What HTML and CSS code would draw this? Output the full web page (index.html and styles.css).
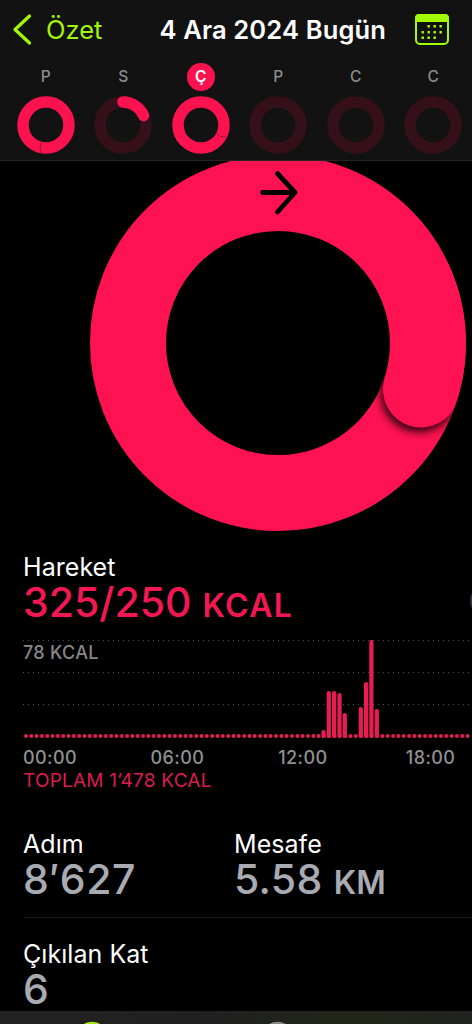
FILE: index.html
```html
<!DOCTYPE html>
<html lang="tr">
<head>
<meta charset="utf-8">
<title>4 Ara 2024</title>
<link rel="stylesheet" href="styles.css">
</head>
<body>
<div class="screen">
  <header class="header">
    <nav class="nav">
      <svg class="back" width="22" height="34" viewBox="0 0 22 34"><path d="M18.500 4 4 17.500 18.500 31"/></svg>
      <span class="back-label">Özet</span>
      <h1 class="title">4 Ara 2024 Bugün</h1>
      <svg class="calendar" width="36" height="34" viewBox="0 0 36 34">
        <rect class="frame" x="2" y="2" width="32" height="29" rx="4"/>
        <path class="top" d="M1 9V5a4 4 0 0 1 4-4h26a4 4 0 0 1 4 4v4z"/>
        <path class="days" d="M13.500 13.300h2.400m3.600 0h2.400m3.600 0h2.400M7.500 19.200h2.400m3.600 0h2.400m3.600 0h2.400m3.600 0h2.400M7.500 24.800h2.400m3.600 0h2.400m3.600 0h2.400"/>
      </svg>
    </nav>
    <div class="week">
      <div class="day"><span class="letter">P</span><svg width="58" height="58" viewBox="0 0 58 58"><circle class="full" cx="29" cy="29" r="23"/><path class="seam" d="M24 57q-2-5 0-10"/></svg></div>
      <div class="day"><span class="letter">S</span><svg width="58" height="58" viewBox="0 0 58 58"><circle class="track" cx="29" cy="29" r="23"/><path class="full" d="M29 6A23 23 0 0 1 49.500 19.500"/></svg></div>
      <div class="day"><span class="letter selected">Ç</span><svg width="58" height="58" viewBox="0 0 58 58"><circle class="full" cx="29" cy="29" r="23"/><path class="seam" d="M44 37q4 5 10 4"/></svg></div>
      <div class="day"><span class="letter">P</span><svg width="58" height="58" viewBox="0 0 58 58"><circle class="track" cx="29" cy="29" r="23"/></svg></div>
      <div class="day"><span class="letter">C</span><svg width="58" height="58" viewBox="0 0 58 58"><circle class="track" cx="29" cy="29" r="23"/></svg></div>
      <div class="day"><span class="letter">C</span><svg width="58" height="58" viewBox="0 0 58 58"><circle class="track" cx="29" cy="29" r="23"/></svg></div>
    </div>
  </header>
  <main class="content">
    <svg class="ring" width="472" height="384" viewBox="0 161 472 384">
      <defs>
        <clipPath id="band"><path clip-rule="evenodd" d="M90 343a188 188 0 1 0 376 0a188 188 0 1 0-376 0M166 343a112 112 0 1 0 224 0a112 112 0 1 0-224 0"/></clipPath>
        <filter id="soft" x="-30%" y="-30%" width="160%" height="160%"><feGaussianBlur stdDeviation="4"/></filter>
      </defs>
      <circle class="move" cx="278" cy="343" r="150"/>
      <g clip-path="url(#band)">
        <circle class="shade" cx="419" cy="394" r="38" filter="url(#soft)"/>
        <path class="move cap" d="M416 284A150 150 0 0 1 421 389.500"/>
      </g>
      <path class="arrow" d="M262.500 192.500h32M277.500 173.500l17.500 19-17.500 19.500"/>
    </svg>
    <section class="activity">
      <h2 class="label">Hareket</h2>
      <p class="value move-value">325/250 <span class="unit">KCAL</span></p>
      <div class="chart">
        <span class="peak">78 KCAL</span>
        <svg width="449" height="99" viewBox="0 0 449 99">
          <path class="grid" d="M0 .5h449M0 32.500h449M0 64.500h449"/>
          <path class="dots" d="M3 96h446"/>
          <path class="bars" d="M300.500 96v-4M305.800 96V53M311.100 96V53M316.500 96V55M321.800 96V75M337.800 96V69M343.100 96V44M348.400 96V2M353.800 96V71"/>
        </svg>
      </div>
      <div class="hours"><span>00:00</span><span>06:00</span><span>12:00</span><span>18:00</span></div>
      <p class="total">TOPLAM 1’478 KCAL</p>
      <span class="more"></span>
    </section>
    <section class="stats">
      <div class="stat"><h2 class="label">Adım</h2><p class="value count">8′627</p></div>
      <div class="stat"><h2 class="label">Mesafe</h2><p class="value distance">5.58 <span class="unit">KM</span></p></div>
    </section>
    <section class="floors"><h2 class="label">Çıkılan Kat</h2><p class="value">6</p></section>
  </main>
  <footer class="tabs">
    <svg width="472" height="13" viewBox="0 0 472 13"><circle class="tab-active" cx="92" cy="26.700" r="16"/><circle class="tab" cx="277.500" cy="26.700" r="16"/></svg>
  </footer>
</div>
</body>
</html>
```
FILE: styles.css
```css
* { box-sizing: border-box; }
body { margin: 0; background: #000; color: #fff; font-family: Inter, "Liberation Sans", sans-serif; }
h1, h2, p { margin: 0; font-weight: 400; }
svg { display: block; fill: none; flex: none; }
.screen { width: 472px; height: 1024px; display: flex; flex-direction: column; overflow: hidden; }
.header { height: 161px; flex: none; background: #121212; border-bottom: 1px solid #242626; }
.nav { height: 60px; display: flex; align-items: center; padding-left: 11px; white-space: nowrap; }
.back { stroke: #a1f60b; stroke-width: 3.3; stroke-linecap: round; stroke-linejoin: round; margin-top: -3px; }
.back-label { width: 114px; padding: 0 0 2px 13px; color: #a1f60b; font-size: 25.500px; letter-spacing: 0; }
.title { width: 267px; padding: 0 0 2px 12.500px; font-size: 25.500px; font-weight: 600; letter-spacing: .15px; }
.frame { stroke: #a4fd08; stroke-width: 2; }
.top { fill: #a4fd08; }
.days { stroke: #a4fd08; stroke-width: 2.4; }
.week { display: flex; margin-left: 7px; }
.day { width: 77.500px; flex: none; display: flex; flex-direction: column; align-items: center; }
.letter { width: 28px; height: 28px; margin: 3px 0 5px; border-radius: 50%; color: #8c8c8e; font-size: 15.500px; font-weight: 500; line-height: 28px; text-align: center; }
.selected { background: #fd1250; color: #fff; font-weight: 600; }
.full { stroke: #fd1250; stroke-width: 11.500; stroke-linecap: round; }
.track { stroke: #35101b; stroke-width: 11.500; }
.seam { stroke: #9c1239; stroke-width: 1; }
.content { height: 850px; flex: none; display: flex; flex-direction: column; overflow: hidden; }
.move { stroke: #ff1251; stroke-width: 76; }
.cap { stroke-linecap: round; }
.shade { fill: #250008; }
.arrow { stroke: #000; stroke-width: 4.800; stroke-linecap: round; stroke-linejoin: round; }
.activity { position: relative; height: 284px; flex: none; padding: 7px 0 0 23px; }
.label { font-size: 25px; line-height: 30px; letter-spacing: .05px; white-space: nowrap; }
.value { font-size: 41px; line-height: 40px; color: #a9abb3; font-weight: 500; white-space: nowrap; }
.unit { font-size: 32px; font-weight: 600; letter-spacing: 1.3px; }
.move-value { color: #f31754; }
.count { letter-spacing: .6px; }
.distance { letter-spacing: .3px; }
.distance .unit { letter-spacing: 0; }
.chart { position: relative; margin-top: 14px; }
.peak { position: absolute; left: 0; top: 2px; color: #87878a; font-size: 18px; line-height: 22px; font-weight: 500; letter-spacing: .3px; }
.grid { stroke: #505052; stroke-width: 1; stroke-dasharray: 1 4; }
.dots { stroke: #e81b53; stroke-width: 4; stroke-linecap: round; stroke-dasharray: 0 5.320; }
.bars { stroke: #e81b53; stroke-width: 4.200; stroke-linecap: round; }
.hours { display: flex; margin-top: 8px; color: #919193; font-size: 18px; line-height: 22px; font-weight: 500; letter-spacing: .4px; }
.hours span { width: 127.600px; flex: none; }
.total { color: #db1c50; font-size: 19px; line-height: 24px; letter-spacing: .22px; }
.more { position: absolute; left: 470px; top: 40px; width: 32px; height: 32px; border-radius: 50%; background: #303033; }
.stats { display: flex; height: 89px; flex: none; margin-left: 24px; border-bottom: 1px solid #1c1c1e; }
.stat { width: 211.500px; flex: none; margin-left: -1px; }
.stat + .stat { margin-left: -.5px; }
.floors { padding: 21px 0 0 23px; }
.tabs { height: 13px; flex: none; background: linear-gradient(90deg, #222 0, #202020 45%, #222618 75%, #202320 100%); }
.tab-active { fill: #a7e31b; }
.tab { fill: #8b8b8b; }
```
